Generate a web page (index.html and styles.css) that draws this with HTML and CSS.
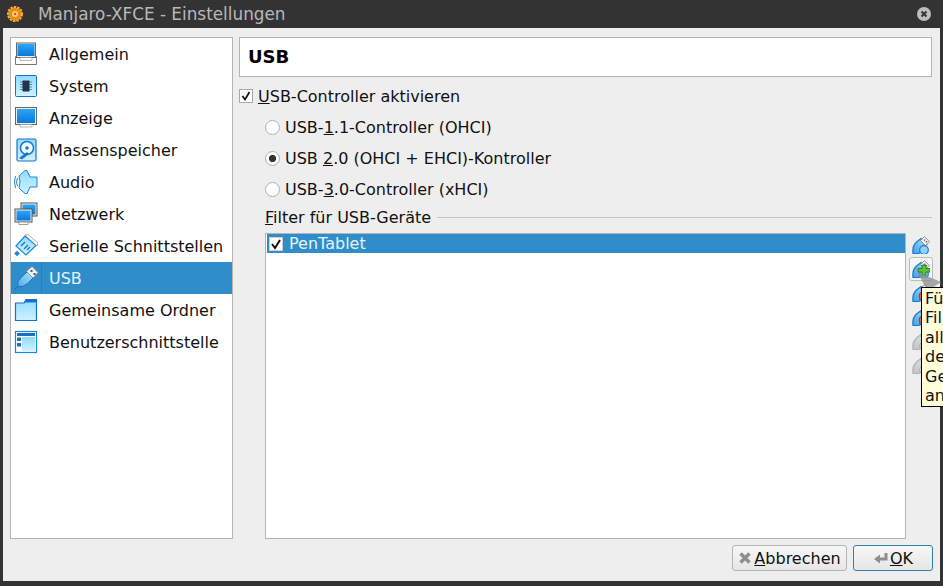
FILE: index.html
```html
<!DOCTYPE html>
<html lang="de">
<head>
<meta charset="utf-8">
<title>Manjaro-XFCE - Einstellungen</title>
<link rel="stylesheet" href="styles.css">
</head>
<body>
<svg class="defs" width="0" height="0" aria-hidden="true">
  <defs>
    <linearGradient id="blue" x1="0" y1="0" x2="0" y2="1"><stop offset="0" stop-color="#2aa6f5"/><stop offset="1" stop-color="#0a78dc"/></linearGradient>
    <linearGradient id="pale" x1="0" y1="0" x2="0" y2="1"><stop offset="0" stop-color="#8fdcff"/><stop offset="1" stop-color="#d2f1ff"/></linearGradient>
    <linearGradient id="usbg" x1="1" y1="0" x2="0" y2="1"><stop offset="0" stop-color="#a8e4ff"/><stop offset="1" stop-color="#3b9fe8"/></linearGradient>
    <g id="filterusb">
      <path d="M1 17.500Q0 10 4.500 6L9 2.500 15 8 11 12 7 17.500Z" fill="url(#usbg)" stroke="#1a78d2" stroke-width="1.200"/>
      <circle cx="12" cy="14" r="4.300" fill="#8fd3fa" stroke="#1a78d2" stroke-width="1.200"/>
      <path d="M8.500 4.500L12.500.7 17.500 5.700 13.500 9.500Z" fill="#f4f4f4" stroke="#777" stroke-width=".8"/>
      <path d="M11.800 3.400h1.400v1.400h-1.400zM13.800 5h1.400v1.400h-1.400z" fill="#555"/>
    </g>
  </defs>
</svg>
<div class="window">
  <header class="titlebar">
    <svg class="app-icon" viewBox="0 0 16 16"><circle cx="8" cy="8" r="6.500" fill="#f08a14"/><circle cx="8" cy="8" r="7" fill="none" stroke="#f6b040" stroke-width="2" stroke-dasharray="2.500 1"/><circle cx="8" cy="8" r="3" fill="#ffd27a"/><circle cx="8" cy="8" r="1.300" fill="#d96a08"/></svg>
    <span class="title">Manjaro-XFCE - Einstellungen</span>
    <span class="close"><svg viewBox="0 0 14 14" width="14" height="14"><circle cx="7" cy="7" r="7" fill="#bdbdbd"/><path d="M4.500 4.500l5 5M9.500 4.500l-5 5" stroke="#333" stroke-width="2"/></svg></span>
  </header>
  <div class="client">
    <div class="panes">
      <nav class="sidebar">
        <div class="nav-item"><svg class="nav-icon" viewBox="0 0 24 24"><path d="M1.500 14.500h21v8h-21z" fill="#fff" stroke="#777"/><rect x="2.500" y="1" width="19" height="14.500" fill="#eee" stroke="#666"/><rect x="3.500" y="2" width="17" height="12" fill="url(#blue)"/><path d="M6 15.500h12v3H6z" fill="#fff" stroke="#888" stroke-width=".6"/></svg><span>Allgemein</span></div>
        <div class="nav-item"><svg class="nav-icon" viewBox="0 0 24 24"><rect x="1.500" y="1.500" width="21" height="21" rx="1" fill="url(#pale)" stroke="#1673cc"/><path d="M6 8h12M6 10.500h12M6 13h12M6 15.500h12" stroke="#4a90c8"/><rect x="8.500" y="6.500" width="7" height="11" fill="#273444"/></svg><span>System</span></div>
        <div class="nav-item"><svg class="nav-icon" viewBox="0 0 24 24"><rect x="1.500" y="1.500" width="21" height="17" fill="#eee" stroke="#666"/><rect x="3" y="3" width="18" height="14" fill="url(#blue)"/><path d="M6 18.500h12v2.500H6z" fill="#fff" stroke="#888" stroke-width=".6"/></svg><span>Anzeige</span></div>
        <div class="nav-item"><svg class="nav-icon" viewBox="0 0 24 24"><rect x="3" y="1" width="19" height="22" rx="1.500" fill="url(#pale)" stroke="#1673cc" stroke-width="1.200"/><circle cx="13" cy="10" r="6.500" fill="#f4fbff" stroke="#1a78d2" stroke-width="1.500"/><circle cx="13" cy="10" r="1.800" fill="#1a78d2"/><path d="M5 20l8-6 2 2-7 5.500z" fill="#1a78d2"/></svg><span>Massenspeicher</span></div>
        <div class="nav-item"><svg class="nav-icon" viewBox="0 0 24 24"><path d="M5 6L11 .5h2L16 7h7v10h-7l-3 6.500h-2L5 18Q7 12 5 6z" fill="url(#pale)" stroke="#1a86dc"/><path d="M3.500 8q-2 4 0 8M1.500 6q-2 6 0 12" fill="none" stroke="#1a86dc"/></svg><span>Audio</span></div>
        <div class="nav-item"><svg class="nav-icon" viewBox="0 0 24 24"><rect x="7" y="1" width="16" height="13" fill="#eee" stroke="#555"/><rect x="8.500" y="2.500" width="13" height="10" fill="url(#blue)"/><rect x="1" y="7" width="17" height="13" fill="#eee" stroke="#555"/><rect x="2.500" y="8.500" width="14" height="10" fill="url(#blue)"/><path d="M5 20h9v2.500H5z" fill="#fff" stroke="#777" stroke-width=".7"/></svg><span>Netzwerk</span></div>
        <div class="nav-item"><svg class="nav-icon" viewBox="0 0 24 24"><path d="M2 12L11 2l11 9.500L12 21z" fill="url(#pale)" stroke="#1a86dc" stroke-width="1.200"/><path d="M11 1L14 .5 24 9l-1 3z" fill="#fff" stroke="#888" stroke-width=".7"/><path d="M7 12l4-4M10 15l4-4M13 16l3-3" stroke="#1a78d2" stroke-width="1.400"/><rect x="1" y="17.500" width="4" height="4" transform="rotate(-45 3 19.500)" fill="#1a86dc"/></svg><span>Serielle Schnittstellen</span></div>
        <div class="nav-item selected"><svg class="nav-icon" viewBox="0 0 24 24"><path d="M.5 23.500L4 19.500Q2.500 16 7 11.500L13 6 19 12 13.500 17.500Q9 21.500 5 20.500Z" fill="url(#usbg)" stroke="#1f6fc0"/><path d="M12.500 5.500L18 .5 24 6.500 19 12Z" fill="#f2f2f2" stroke="#888" stroke-width=".8"/><path d="M16.500 4h2v2h-2zM19.500 7h2v2h-2z" fill="#555"/></svg><span class="nav-sep"></span><span>USB</span></div>
        <div class="nav-item"><svg class="nav-icon" viewBox="0 0 24 24"><path d="M1.500 5V22.500h21V1.500H12L10 5z" fill="url(#pale)" stroke="#1673cc" stroke-width="1.200"/><path d="M10 4.500L12 1.500h10.500v3z" fill="#1673cc"/></svg><span>Gemeinsame Ordner</span></div>
        <div class="nav-item"><svg class="nav-icon" viewBox="0 0 24 24"><rect x="1.500" y="1.500" width="21" height="21" fill="#fff" stroke="#1a86dc" stroke-width="1.200"/><rect x="3" y="3" width="18" height="3" fill="#1d6fc0"/><rect x="3" y="7.500" width="4" height="3.500" fill="#1d6fc0"/><rect x="3" y="13" width="4" height="3.500" fill="#1d6fc0"/><rect x="8" y="7" width="13" height="14" fill="url(#pale)"/></svg><span>Benutzerschnittstelle</span></div>
      </nav>
      <main class="main">
        <h1 class="page-title">USB</h1>
        <label class="check-row"><span class="checkbox"><svg viewBox="0 0 12 12" width="12" height="12"><path d="M2.500 6l2.500 3.500 4.500-7.500" fill="none" stroke="#111" stroke-width="1.700"/></svg></span><span><u>U</u>SB-Controller aktivieren</span></label>
        <div class="radios">
          <label class="radio-row"><span class="radio"></span><span>USB-<u>1</u>.1-Controller (OHCI)</span></label>
          <label class="radio-row"><span class="radio on"></span><span>USB <u>2</u>.0 (OHCI + EHCI)-Kontroller</span></label>
          <label class="radio-row"><span class="radio"></span><span>USB-<u>3</u>.0-Controller (xHCI)</span></label>
        </div>
        <div class="filter">
          <div class="filter-head"><span><u>F</u>ilter für USB-Geräte</span><span class="rule"></span></div>
          <div class="filter-body">
            <div class="list">
              <div class="list-row"><span class="checkbox small"><svg viewBox="0 0 12 12" width="12" height="12"><path d="M2 6l3 4 5-8" fill="none" stroke="#111" stroke-width="2"/></svg></span><span>PenTablet</span></div>
            </div>
            <div class="tools">
              <span class="tool"><svg viewBox="0 0 18 18"><use href="#filterusb"/></svg></span>
              <span class="tool active"><svg viewBox="0 0 18 18"><use href="#filterusb"/><path d="M10 5h4v3.500h4V12h-4v3.500h-4V12H6V8.500h4z" fill="#5cc23a" stroke="#1f7a1f" stroke-width=".9"/></svg></span>
              <span class="tool"><svg viewBox="0 0 18 18"><use href="#filterusb"/><circle cx="11" cy="12" r="4" fill="#e8622a" stroke="#a33"/></svg></span>
              <span class="tool"><svg viewBox="0 0 18 18"><use href="#filterusb"/><circle cx="11" cy="12" r="4" fill="#e8622a" stroke="#a33"/></svg></span>
              <span class="tool off"><svg viewBox="0 0 18 18"><use href="#filterusb"/></svg></span>
              <span class="tool off"><svg viewBox="0 0 18 18"><use href="#filterusb"/></svg></span>
            </div>
          </div>
        </div>
      </main>
    </div>
    <footer class="footer">
      <button class="btn"><svg viewBox="0 0 14 14" width="14" height="14"><path d="M2.500 2.500l9 9M11.500 2.500l-9 9" stroke="#8e8e8e" stroke-width="3.400"/></svg><span><u>A</u>bbrechen</span></button>
      <button class="btn default"><svg viewBox="0 0 16 14" width="16" height="14"><path d="M13 2v6H6" fill="none" stroke="#8e8e8e" stroke-width="3"/><path d="M7 3.500v9L1 8z" fill="#8e8e8e"/></svg><span><u>O</u>K</span></button>
    </footer>
  </div>
</div>
<svg class="cursor" viewBox="0 0 24 16" width="24" height="16" aria-hidden="true"><path d="M0 0L24 10 15 16 9 16Z" fill="#8d8d8d" fill-opacity=".75"/></svg>
<div class="tooltip">Fü<br>Fil<br>all<br>de<br>Ge<br>an</div>
</body>
</html>
```
FILE: styles.css
```css
* { box-sizing: border-box; }
html, body { margin: 0; padding: 0; width: 943px; height: 586px; overflow: hidden; }
body { position: relative; font-family: "DejaVu Sans", sans-serif; font-size: 16px; color: #111; background: #333; }
.defs { position: absolute; }
.window { width: 943px; height: 586px; display: flex; flex-direction: column; background: #333; }
.titlebar { height: 28px; flex: none; display: flex; align-items: center; padding: 0 12px 0 7px; color: #b8b8b8; font-size: 16.850px; }
.app-icon { width: 16px; height: 16px; flex: none; margin-right: 15px; }
.title { flex: 1; }
.close { display: flex; }
.client { flex: none; height: 553px; margin: 0 3px; background: #eeeeee; padding: 9px 7px 0 7px; display: flex; flex-direction: column; }
.panes { display: flex; gap: 6px; height: 502px; flex: none; padding-right: 1px; }
.sidebar { width: 223px; flex: none; background: #fff; border: 1px solid #b4b4b4; }
.nav-item { height: 32px; display: flex; align-items: center; padding-left: 3px; }
.nav-icon { width: 24px; height: 24px; flex: none; margin-right: 11px; }
.nav-item.selected { background: #2f8ec9; color: #e4f1fa; }
.nav-item.selected .nav-icon { margin-right: 0; }
.nav-sep { width: 1px; height: 32px; background: #2a80b6; margin: 0 7px 0 3px; }
.main { flex: 1; min-width: 0; display: flex; flex-direction: column; }
.page-title { margin: 0; height: 40px; flex: none; background: #fff; border: 1px solid #b4b4b4; font-size: 18px; font-weight: 700; line-height: 38px; padding-left: 8px; color: #000; }
.check-row { display: flex; align-items: center; height: 20px; margin-top: 9px; gap: 5px; }
.checkbox { width: 14px; height: 14px; flex: none; background: #fff; border: 1px solid #a8a8a8; display: flex; align-items: center; justify-content: center; }
.radios { display: flex; flex-direction: column; gap: 11px; margin: 11px 0 0 26px; }
.radio-row { display: flex; align-items: center; gap: 5px; height: 20px; }
.radio { width: 15px; height: 15px; flex: none; border-radius: 50%; background: #fff; border: 1px solid #b0b0b0; display: flex; align-items: center; justify-content: center; }
.radio.on { background: radial-gradient(circle, #333 0 3.200px, #fff 4px); }
.filter { flex: 1; min-height: 0; margin: 8px 0 0 26px; display: flex; flex-direction: column; }
.filter-head { display: flex; align-items: center; gap: 6px; height: 20px; flex: none; }
.rule { flex: 1; height: 1px; background: #c4c4c4; }
.filter-body { flex: 1; min-height: 0; display: flex; gap: 3px; margin-top: 6px; }
.list { width: 641px; flex: none; background: #fff; border: 1px solid #b4b4b4; padding: 0 0 0 1px; }
.list-row { height: 19px; background: #2f8ec9; color: #e8f3fb; display: flex; align-items: center; gap: 6px; padding-left: 2px; }
.checkbox.small { width: 14px; height: 14px; border-color: #d0d0d0; }
.tools { flex: 1; display: flex; flex-direction: column; }
.tool { width: 24px; height: 24px; display: flex; align-items: center; justify-content: center; }
.tool svg { width: 18px; height: 18px; }
.tool.active { background: #f6f6f6; border: 1px solid #bcbcbc; border-radius: 3px; }
.tool.off { filter: grayscale(1); opacity: .45; }
.footer { flex: 1; display: flex; justify-content: flex-end; gap: 6px; padding-top: 6px; }
.btn { height: 26px; padding: 0; display: flex; align-items: center; justify-content: center; gap: 2px; font: inherit; color: #111; background: linear-gradient(#f7f7f7, #e6e6e6); border: 1px solid #b4b4b4; border-radius: 3px; width: 115px; }
.btn.default { width: 80px; border-color: #2f7fb0; gap: 1px; }
.cursor { position: absolute; left: 917px; top: 272px; }
.tooltip { position: absolute; left: 921px; top: 287px; width: 22px; height: 120px; background: #ffffdc; border: 1px solid #000; border-right: 0; padding: 1px 0 0 3px; line-height: 19.400px; white-space: nowrap; color: #111; }
```
